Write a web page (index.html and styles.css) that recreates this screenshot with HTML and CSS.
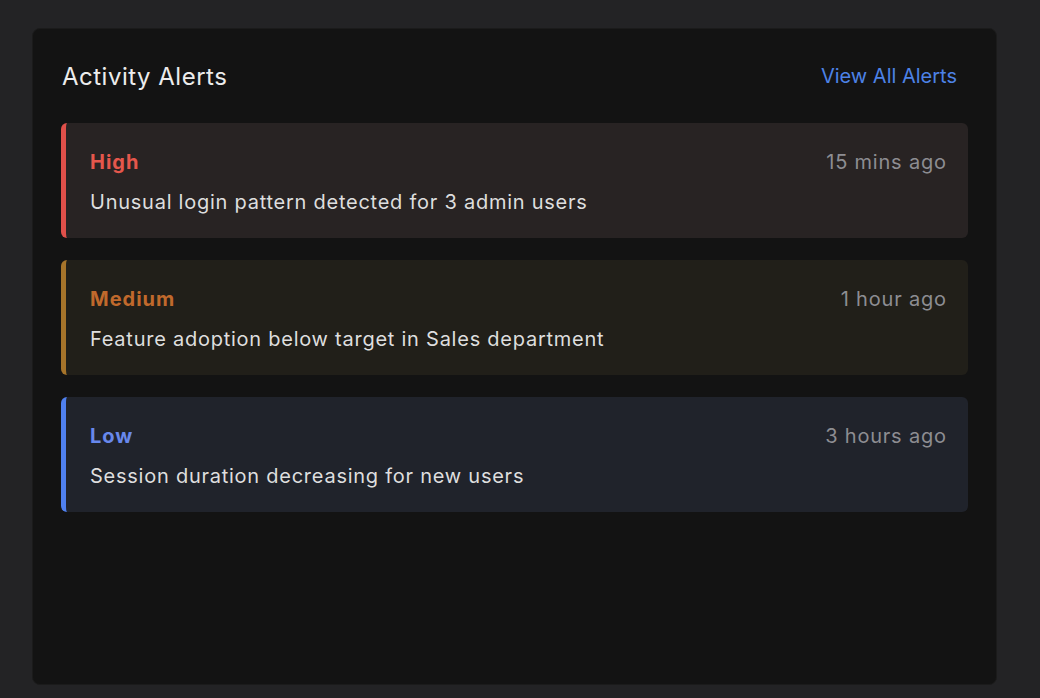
FILE: index.html
```html
<!DOCTYPE html>
<html lang="en">
<head>
<meta charset="utf-8">
<title>Activity Alerts</title>
<link rel="stylesheet" href="styles.css">
</head>
<body>
<section class="panel">
  <header class="panel-head">
    <h2 class="panel-title">Activity Alerts</h2>
    <a class="panel-link" href="#">View All Alerts</a>
  </header>
  <ul class="alerts">
    <li class="alert alert-high">
      <div class="alert-top">
        <span class="alert-level">High</span>
        <span class="alert-time">15 mins ago</span>
      </div>
      <p class="alert-msg">Unusual login pattern detected for 3 admin users</p>
    </li>
    <li class="alert alert-medium">
      <div class="alert-top">
        <span class="alert-level">Medium</span>
        <span class="alert-time">1 hour ago</span>
      </div>
      <p class="alert-msg">Feature adoption below target in Sales department</p>
    </li>
    <li class="alert alert-low">
      <div class="alert-top">
        <span class="alert-level">Low</span>
        <span class="alert-time">3 hours ago</span>
      </div>
      <p class="alert-msg">Session duration decreasing for new users</p>
    </li>
  </ul>
</section>
</body>
</html>
```
FILE: styles.css
```css
* { box-sizing: border-box; }
html, body { margin: 0; padding: 0; }
body {
  background: #232325;
  font-family: Inter, "Noto Sans", "Liberation Sans", sans-serif;
  padding: 28px 43px 13px 32px;
  height: 698px;
}
.panel {
  background: #131313;
  border: 1px solid #1b1b1b;
  border-radius: 8px;
  height: 657px;
  padding: 28px 28px;
}
.panel-head {
  display: flex;
  justify-content: space-between;
  align-items: center;
  height: 38px;
  margin-bottom: 28px;
}
.panel-title {
  margin: 0;
  padding-left: 1px;
  font-size: 24px;
  font-weight: 400;
  letter-spacing: 0.5px;
  color: #ececec;
}
.panel-link {
  color: #4d82e6;
  text-decoration: none;
  font-size: 20px;
  padding-right: 11px;
}
.alerts {
  list-style: none;
  margin: 0;
  padding: 0;
  display: flex;
  flex-direction: column;
  gap: 22px;
}
.alert {
  height: 115px;
  border-radius: 6px;
  border-left: 5px solid;
  padding: 25px 22px 0 24px;
}
.alert-top {
  display: flex;
  justify-content: space-between;
  align-items: center;
  height: 28px;
}
.alert-level {
  font-weight: 700;
  font-size: 20px;
  letter-spacing: 1px;
}
.alert-time {
  color: #8d8d92;
  font-size: 20px;
  letter-spacing: 0.8px;
  margin-right: -0.8px;
}
.alert-msg {
  margin: 12px 0 0;
  height: 28px;
  line-height: 28px;
  font-size: 20px;
  letter-spacing: 0.75px;
  color: #dedede;
}
.alert-high { background: #282323; border-left-color: #e0504a; }
.alert-high .alert-level { color: #e5574c; }
.alert-medium { background: #211f19; border-left-color: #a6742a; }
.alert-medium .alert-level { color: #c0692c; }
.alert-low { background: #20232b; border-left-color: #4f80ef; }
.alert-low .alert-level { color: #6888ec; }
```
